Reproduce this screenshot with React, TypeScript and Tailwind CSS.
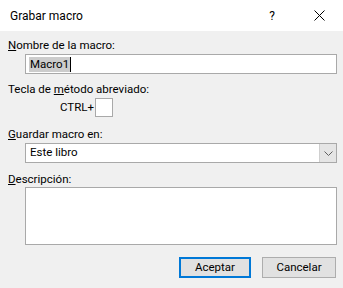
export default function App() {
  return (
    <div
      className="w-[343px] h-[288px] bg-[#f0f0f0] flex flex-col overflow-hidden text-[11.5px] text-black"
      style={{ fontFamily: 'Roboto, "Noto Sans", sans-serif' }}
    >
      {/* Title bar */}
      <div className="h-[31px] bg-white flex items-center shrink-0 text-[12px]">
        <span className="pl-[10px] flex-1 leading-none">Grabar macro</span>
        <span className="w-[12px] text-center leading-none mr-[36px]">?</span>
        <svg width="11" height="11" viewBox="0 0 11 11" className="mr-[18px]">
          <path d="M0.5 0.5 L10.5 10.5 M10.5 0.5 L0.5 10.5" stroke="#000" strokeWidth="1" />
        </svg>
      </div>

      {/* Body */}
      <div className="flex flex-col pl-[8px] pr-[6px]">
        <label className="mt-[6px] h-[16px] leading-[16px]">
          <u>N</u>ombre de la macro:
        </label>
        <div className="mt-[1px] ml-[17px] h-[20px] bg-white border border-[#a9a9a9] flex items-center pl-[3px]">
          <span className="bg-[#cccccc] leading-[15px] px-[1px]">Macro1</span>
          <span className="w-px h-[15px] bg-black" />
        </div>

        <label className="mt-[7px] h-[16px] leading-[16px]">
          Tecla de <u>m</u>étodo abreviado:
        </label>
        <div className="mt-[1px] flex items-center h-[19px]">
          <span className="ml-[52px] w-[35px]">CTRL+</span>
          <div className="w-[18px] h-[19px] bg-white border border-[#a9a9a9]" />
        </div>

        <label className="mt-[9px] h-[16px] leading-[16px]">
          <u>G</u>uardar macro en:
        </label>
        <div className="mt-[1px] ml-[17px] h-[20px] bg-white border border-[#a9a9a9] flex items-center">
          <span className="flex-1 pl-[4px] leading-none">Este libro</span>
          <div className="w-[17px] h-[18px] bg-[#e5e5e5] border-l border-[#cfcfcf] flex items-center justify-center">
            <svg width="9" height="5" viewBox="0 0 9 5">
              <path d="M0.5 0.5 L4.5 4.5 L8.5 0.5" stroke="#606060" strokeWidth="1" fill="none" />
            </svg>
          </div>
        </div>

        <label className="mt-[9px] h-[15px] leading-[15px]">
          <u>D</u>escripción:
        </label>
        <div className="mt-[0px] ml-[17px] h-[58px] bg-white border border-[#a9a9a9]" />

        <div className="mt-[12px] flex justify-end gap-[11px] pr-[1px]">
          <button className="w-[72px] h-[21px] bg-[#e1e1e1] border-2 border-[#0078d7] leading-none">
            Aceptar
          </button>
          <button className="w-[74px] h-[21px] bg-[#e1e1e1] border border-[#adadad] leading-none">
            Cancelar
          </button>
        </div>
      </div>
    </div>
  );
}
